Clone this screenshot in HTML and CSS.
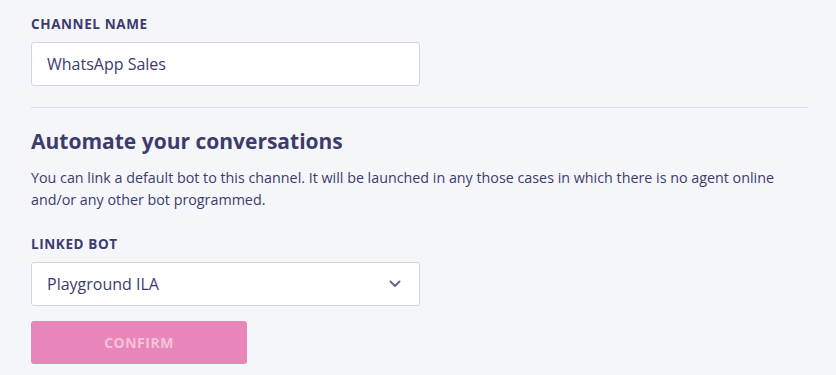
FILE: index.html
```html
<!DOCTYPE html>
<html lang="en">
<head>
  <meta charset="UTF-8" />
  <meta name="viewport" content="width=device-width, initial-scale=1.0" />
  <title>Channel settings</title>
  <link rel="stylesheet" href="styles.css">
</head>
<body>
  <div class="page">
    <div class="field">
      <label class="label" for="channel-name">CHANNEL NAME</label>
      <input id="channel-name" class="input" type="text" value="WhatsApp Sales" />
    </div>
    <hr class="divider" />
    <h2 class="title">Automate your conversations</h2>
    <p class="desc">You can link a default bot to this channel. It will be launched in any those cases in which there is no agent online and/or any other bot programmed.</p>
    <div class="field bot-field">
      <label class="label" for="linked-bot">LINKED BOT</label>
      <div class="select">
        <span>Playground ILA</span>
        <svg width="12" height="8" viewBox="0 0 12 8"><path d="M1.5 1.5 L6 6 L10.5 1.5" fill="none" stroke="#5f6b85" stroke-width="2" stroke-linecap="round" stroke-linejoin="round"/></svg>
      </div>
    </div>
    <button class="confirm" disabled>CONFIRM</button>
  </div>
</body>
</html>
```

FILE: styles.css
```css
body { margin: 0; background: #f5f6fa; font-family: "Open Sans", Arial, sans-serif; color: #3d3b6d; }
.page { padding: 16px 28px 0 31px; }
.field { display: flex; flex-direction: column; width: 389px; }
.label { font-size: 13.5px; font-weight: 700; letter-spacing: 0.6px; line-height: 16px; margin-bottom: 10px; }
.input, .select { box-sizing: border-box; height: 44px; border: 1px solid #d6d6de; border-radius: 3px; background: #fff; padding: 0 15px; font-family: inherit; font-size: 16px; color: #3d3b6d; }
.input { outline: none; }
.select { display: flex; align-items: center; justify-content: space-between; padding-right: 18px; font-weight: 500; }
.divider { border: none; border-top: 1px solid #dcdce3; margin: 21px 0 0; }
.title { font-size: 21px; font-weight: 700; margin: 19px 0 0; line-height: 28px; }
.desc { font-size: 14.3px; line-height: 22px; margin: 12px 0 0; max-width: 775px; }
.bot-field { margin-top: 25px; }
.confirm { margin-top: 15px; width: 216px; height: 43px; border: none; border-radius: 3px; background: #e986b9; color: #f6c3dd; font-family: inherit; font-size: 14px; font-weight: 700; letter-spacing: 0.5px; }
```
